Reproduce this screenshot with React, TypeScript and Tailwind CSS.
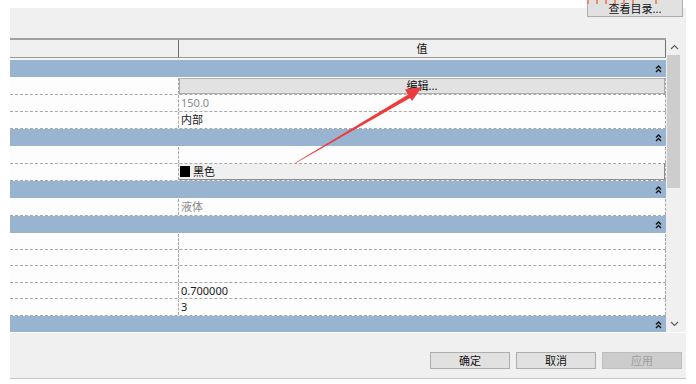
import type { ReactNode } from "react";

type Row =
  | { kind: "group" }
  | { kind: "row"; value?: ReactNode; dim?: boolean; h?: 16 | 17; cell?: "edit" | "color" };

const rows: Row[] = [
  { kind: "group" },
  { kind: "row", cell: "edit" },
  { kind: "row", value: "150.0", dim: true },
  { kind: "row", value: "内部" },
  { kind: "group" },
  { kind: "row" },
  { kind: "row", cell: "color" },
  { kind: "group" },
  { kind: "row", value: "液体", dim: true },
  { kind: "group" },
  { kind: "row", h: 16 },
  { kind: "row", h: 16 },
  { kind: "row", h: 17 },
  { kind: "row", h: 16, value: "0.700000" },
  { kind: "row", h: 17, value: "3" },
  { kind: "group" },
];

function Collapse() {
  return (
    <svg width="7" height="8" viewBox="0 0 7 8" className="shrink-0">
      <path d="M1 3.5 L3.5 1 L6 3.5" fill="none" stroke="#111" strokeWidth="1.3" />
      <path d="M1 7 L3.5 4.5 L6 7" fill="none" stroke="#111" strokeWidth="1.3" />
    </svg>
  );
}

function GroupRow() {
  return (
    <div className="flex h-[18px] shrink-0 items-center justify-end border-b border-white bg-[#99b4d1] pr-[4px]">
      <Collapse />
    </div>
  );
}

function DataRow({ row }: { row: Extract<Row, { kind: "row" }> }) {
  const height = row.h === 16 ? "h-[16px]" : "h-[17px]";
  let value: ReactNode = null;
  if (row.cell === "edit") {
    value = (
      <div className="flex h-full w-full items-center justify-center border border-[#adadad] bg-[#e2e2e2] text-[#111]">
        编辑...
      </div>
    );
  } else if (row.cell === "color") {
    value = (
      <div className="flex h-full w-full items-center gap-[3px] border-b border-r border-[#8c8c8c] bg-[#f0f0f0] pl-[1px] text-[#111]">
        <span className="h-[11px] w-[10px] bg-black" />
        黑色
      </div>
    );
  } else if (row.value) {
    value = (
      <span className={row.dim ? "pl-[2px] text-[#8a8a8a]" : "pl-[2px] text-[#1a1a1a]"}>{row.value}</span>
    );
  }
  return (
    <div className={`flex ${height} shrink-0 border-b border-dashed border-[#a8a8a8] bg-[#fdfdfd]`}>
      <div className="w-[169px] shrink-0 border-r border-dashed border-[#a8a8a8]" />
      <div className="flex flex-1 items-center border-r border-dashed border-[#a8a8a8] leading-[16px]">
        {value}
      </div>
    </div>
  );
}

function Scrollbar() {
  return (
    <div className="flex w-[17px] shrink-0 flex-col bg-[#f0f0f0]">
      <div className="flex h-[17px] items-center justify-center">
        <svg width="9" height="6" viewBox="0 0 9 6">
          <path d="M1 5 L4.5 1.5 L8 5" fill="none" stroke="#606060" strokeWidth="1.2" />
        </svg>
      </div>
      <div className="flex-1">
        <div className="ml-[1px] h-[133px] w-[13px] bg-[#cdcdcd]" />
      </div>
      <div className="flex h-[17px] items-center justify-center">
        <svg width="9" height="6" viewBox="0 0 9 6">
          <path d="M1 1 L4.5 4.5 L8 1" fill="none" stroke="#606060" strokeWidth="1.2" />
        </svg>
      </div>
    </div>
  );
}

export default function App() {
  return (
    <div className="relative h-[384px] w-[696px] overflow-hidden bg-white font-['Noto_Sans','Noto_Sans_CJK_SC',sans-serif] text-[11px] text-[#111]">
      <div className="ml-[10px] flex h-[379px] w-[676px] flex-col border-b border-[#c4c4c4] bg-[#f0f0f0]">
        {/* top strip */}
        <div className="h-[8px] shrink-0 bg-white" />
        <div className="h-[30px] shrink-0" />

        {/* property grid */}
        <div className="flex h-[294px] shrink-0 overflow-hidden">
          <div className="flex w-[656px] flex-col overflow-hidden bg-[#fdfdfd]">
            <div className="flex h-[20px] shrink-0 border-b border-t-2 border-[#a0a0a0] border-b-[#9a9a9a] bg-[#f0f0f0]">
              <div className="w-[169px] shrink-0 border-r border-[#6e6e6e]" />
              <div className="flex flex-1 items-center justify-center border-r border-[#6e6e6e] leading-none">值</div>
            </div>
            <div className="h-[2px] shrink-0 bg-[#f4f4f4]" />
            {rows.map((r, i) => (r.kind === "group" ? <GroupRow key={i} /> : <DataRow key={i} row={r} />))}
          </div>
          <Scrollbar />
        </div>

        <div className="h-[1px] shrink-0 bg-white" />

        {/* buttons */}
        <div className="flex flex-1 items-start justify-end gap-[6px] pr-[4px] pt-[19px]">
          <button className="flex h-[17px] w-[80px] items-center justify-center border border-[#adadad] bg-[#e1e1e1] leading-none">
            确定
          </button>
          <button className="flex h-[17px] w-[80px] items-center justify-center border border-[#adadad] bg-[#e1e1e1] leading-none">
            取消
          </button>
          <button className="flex h-[17px] w-[80px] items-center justify-center border border-[#bfbfbf] bg-[#cccccc] leading-none text-[#a0a0a0]">
            应用
          </button>
        </div>
      </div>

      {/* top right button, its upper edge runs past the crop */}
      <div className="absolute left-[587px] top-0 flex h-[17px] w-[96px] items-center justify-center border-x border-b border-[#adadad] bg-[#e1e1e1] pt-[1px] leading-none">
        查看目录...
      </div>
      <div className="absolute left-[587px] top-0 flex h-[4px] gap-[7px]">
        {[0, 1, 2, 3, 4, 5].map((i) => (
          <span key={i} className="h-full w-[2px] bg-[#f08a66]" />
        ))}
      </div>
      <span className="absolute left-[655px] top-0 h-[4px] w-[2px] bg-[#f08a66]" />

      {/* annotation arrow */}
      <svg className="pointer-events-none absolute left-0 top-0" width="696" height="384">
        <polygon points="295,163.5 295.6,162.5 409,94 411,97.5" fill="#ee3b3b" />
        <polygon points="422,87 405,89.5 412,101" fill="#ee3b3b" />
      </svg>
    </div>
  );
}
